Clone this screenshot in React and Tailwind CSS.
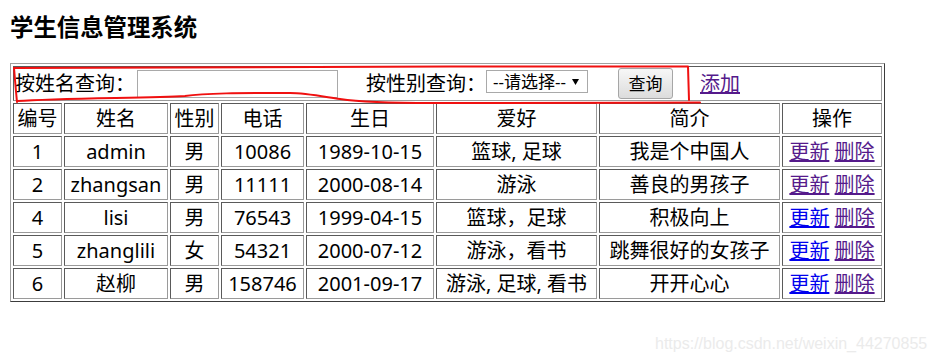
import React from "react";

const rows = [
  { id: "1", name: "admin", sex: "男", tel: "10086", bd: "1989-10-15", hobby: "篮球, 足球", intro: "我是个中国人", upd: "v" },
  { id: "2", name: "zhangsan", sex: "男", tel: "11111", bd: "2000-08-14", hobby: "游泳", intro: "善良的男孩子", upd: "v" },
  { id: "4", name: "lisi", sex: "男", tel: "76543", bd: "1999-04-15", hobby: "篮球，足球", intro: "积极向上", upd: "n" },
  { id: "5", name: "zhanglili", sex: "女", tel: "54321", bd: "2000-07-12", hobby: "游泳，看书", intro: "跳舞很好的女孩子", upd: "n" },
  { id: "6", name: "赵柳", sex: "男", tel: "158746", bd: "2001-09-17", hobby: "游泳, 足球, 看书", intro: "开开心心", upd: "n" },
];

const cell =
  "border border-t-[#5a5a5a] border-l-[#5a5a5a] border-r-[#9a9a9a] border-b-[#9a9a9a] p-[1px] text-center leading-[27px] whitespace-nowrap font-normal";

export default function App() {
  return (
    <div
      className="relative w-[935px] h-[364px] bg-white overflow-hidden text-black"
      style={{ fontFamily: '"Noto Sans", "Noto Sans CJK SC", sans-serif' }}
    >
      <h3 className="pt-[12px] pl-[10px] text-[23.4px] leading-[31px] font-bold">学生信息管理系统</h3>
      <table className="mt-[20px] ml-[10px] w-[875px] table-fixed border-separate border-spacing-[2px] border border-t-[#a0a0a0] border-l-[#a0a0a0] border-r-[#3c3c3c] border-b-[#3c3c3c] text-[20px]">
        <colgroup>
          <col className="w-[49px]" />
          <col className="w-[104px]" />
          <col className="w-[49px]" />
          <col className="w-[83px]" />
          <col className="w-[128px]" />
          <col className="w-[161px]" />
          <col className="w-[181px]" />
          <col className="w-[100px]" />
        </colgroup>
        <tbody>
          <tr>
            <td colSpan={8} className="border border-t-[#5a5a5a] border-l-[#5a5a5a] border-r-[#9a9a9a] border-b-[#9a9a9a] p-[1px]">
              <div className="flex items-center h-[31px] whitespace-nowrap">
                <span className="leading-[27px]">按姓名查询：</span>
                <div className="ml-[2px] w-[201px] h-[28px] border border-[#a9a9a9] bg-white" />
                <span className="ml-[28px] leading-[27px]">按性别查询：</span>
                <div className="mb-[4px] flex items-center w-[102px] h-[23px] border border-[#a9a9a9] bg-white pl-[6px] text-[17px] leading-[21px]">
                  <span>--请选择--</span>
                  <svg className="ml-[6px]" width="7" height="6" viewBox="0 0 7 6">
                    <path d="M0 0 H7 L3.5 6 Z" fill="#000" />
                  </svg>
                </div>
                <div className="ml-[30px] w-[55px] h-[31px] flex items-center justify-center rounded-[3px] border border-[#a6a6a6] bg-gradient-to-b from-[#f7f7f7] to-[#dcdcdc] text-[17px]">
                  查询
                </div>
                <a className="ml-[27px] leading-[27px] text-[#551a8b] underline" href="#">添加</a>
              </div>
            </td>
          </tr>
          <tr>
            {["编号", "姓名", "性别", "电话", "生日", "爱好", "简介", "操作"].map((h) => (
              <td key={h} className={cell}>{h}</td>
            ))}
          </tr>
          {rows.map((r) => (
            <tr key={r.id}>
              <td className={cell}>{r.id}</td>
              <td className={cell}>{r.name}</td>
              <td className={cell}>{r.sex}</td>
              <td className={cell}>{r.tel}</td>
              <td className={cell}>{r.bd}</td>
              <td className={cell}>{r.hobby}</td>
              <td className={cell}>{r.intro}</td>
              <td className={cell}>
                <a href="#" className={r.upd === "v" ? "underline text-[#551a8b]" : "underline text-[#0000ee]"}>更新</a>{" "}
                <a href="#" className="underline text-[#551a8b]">删除</a>
              </td>
            </tr>
          ))}
        </tbody>
      </table>

      <svg className="absolute left-0 top-0 pointer-events-none" width="935" height="364" viewBox="0 0 935 364">
        <path
          d="M14 68 C 120 68, 300 67, 450 66.5 S 640 66.5, 688 66.5 L 689 100"
          fill="none"
          stroke="#f01010"
          strokeWidth="2"
          strokeLinecap="round"
          strokeLinejoin="round"
        />
        <path
          d="M14 68 C 15 80, 16 92, 17 102"
          fill="none"
          stroke="#f01010"
          strokeWidth="2"
          strokeLinecap="round"
        />
        <path
          d="M700 102.5 C 600 103, 480 103, 433 103 C 390 103, 360 102, 340 99 C 320 96, 305 93, 290 93 C 240 93, 205 93, 185 96 C 150 98, 60 98, 17 101"
          fill="none"
          stroke="#f01010"
          strokeWidth="2"
          strokeLinecap="round"
        />
      </svg>

      <div
        className="absolute left-[655px] top-[335px] text-[16px] leading-[18px] text-[#ebebeb] whitespace-nowrap"
        style={{ fontFamily: '"Liberation Sans", Arial, sans-serif' }}
      >
        https://blog.csdn.net/weixin_44270855
      </div>
    </div>
  );
}
